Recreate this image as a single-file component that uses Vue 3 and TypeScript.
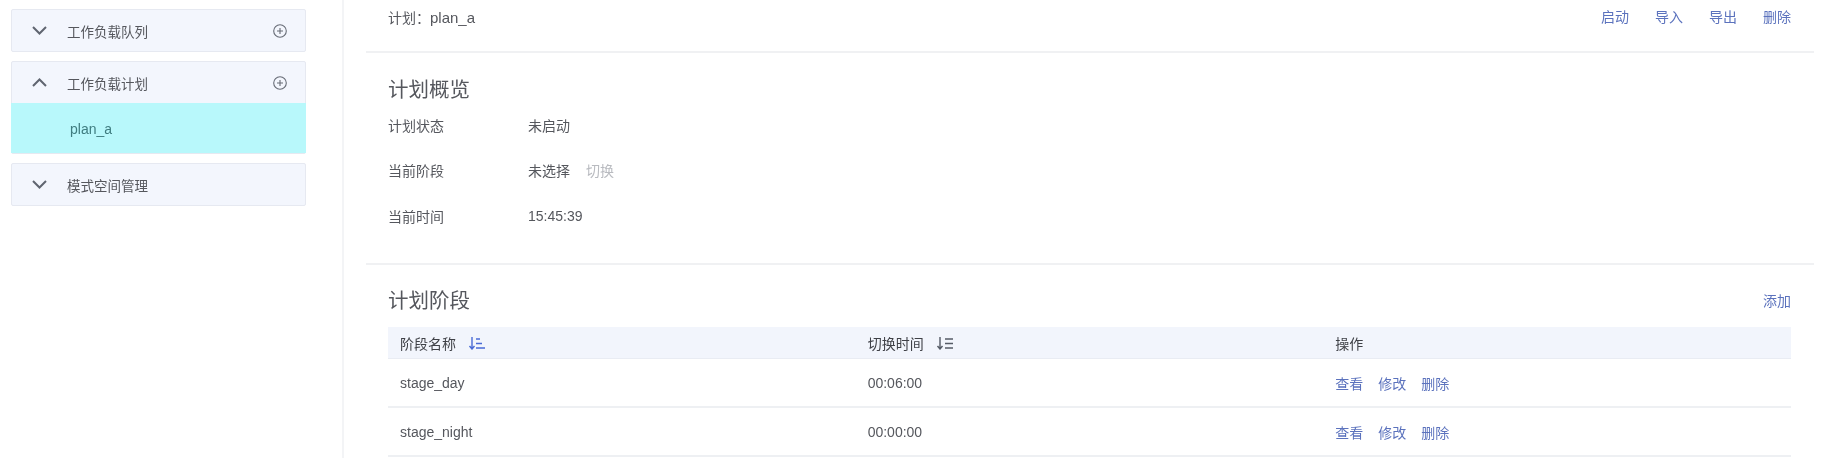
<template>
  <div class="page">
    <aside class="sidebar">
      <section v-for="group in groups" :key="group.name" class="group">
        <div class="group-head">
          <svg class="chevron" :class="{ open: group.open }" viewBox="0 0 15 9" width="15" height="9">
            <path d="M1 1l6.500 6.500L14 1" fill="none" stroke="#5f6570" stroke-width="2" />
          </svg>
          <span class="group-name">{{ group.name }}</span>
          <svg v-if="group.addable" class="add" viewBox="0 0 14 14" width="14" height="14">
            <circle cx="7" cy="7" r="6.300" fill="none" stroke="#666b75" stroke-width="1.100" />
            <path d="M7 4v6M4 7h6" fill="none" stroke="#666b75" stroke-width="1.100" />
          </svg>
        </div>
        <div v-for="item in group.items" :key="item" class="group-item">{{ item }}</div>
      </section>
    </aside>

    <main class="content">
      <header class="plan-bar">
        <div class="plan-name"><span class="plan-key">计划：</span>plan_a</div>
        <nav class="links">
          <a v-for="action in planActions" :key="action">{{ action }}</a>
        </nav>
      </header>

      <section class="overview">
        <h2>计划概览</h2>
        <div v-for="row in overview" :key="row.label" class="info-row">
          <span class="info-label">{{ row.label }}</span>
          <span class="info-value">{{ row.value }}</span>
          <span v-if="row.extra" class="info-extra">{{ row.extra }}</span>
        </div>
      </section>

      <section class="stages">
        <div class="stages-head">
          <h2>计划阶段</h2>
          <a class="add-link">添加</a>
        </div>
        <div class="table">
          <div class="cell th">
            阶段名称
            <svg class="sort" viewBox="0 0 18 14" width="18" height="14">
              <path d="M4 1v12M1.500 10L4 13l2.500-3" fill="none" stroke="#4a6bd6" stroke-width="1.400" />
              <path d="M8 3h4M8 7.500h6M8 12h9" fill="none" stroke="#4a6bd6" stroke-width="1.400" />
            </svg>
          </div>
          <div class="cell th">
            切换时间
            <svg class="sort" viewBox="0 0 18 14" width="18" height="14">
              <path d="M4 1v12M1.500 10L4 13l2.500-3" fill="none" stroke="#555b66" stroke-width="1.400" />
              <path d="M9 3h8M9 7.500h8M9 12h8" fill="none" stroke="#555b66" stroke-width="1.400" />
            </svg>
          </div>
          <div class="cell th">操作</div>
          <template v-for="stage in stages" :key="stage.name">
            <div class="cell">{{ stage.name }}</div>
            <div class="cell">{{ stage.time }}</div>
            <div class="cell ops">
              <a v-for="op in rowOps" :key="op">{{ op }}</a>
            </div>
          </template>
        </div>
      </section>
    </main>
  </div>
</template>

<script setup lang="ts">
interface Group {
  name: string;
  open: boolean;
  addable: boolean;
  items: string[];
}

const groups: Group[] = [
  { name: '工作负载队列', open: false, addable: true, items: [] },
  { name: '工作负载计划', open: true, addable: true, items: ['plan_a'] },
  { name: '模式空间管理', open: false, addable: false, items: [] }
];

const planActions = ['启动', '导入', '导出', '删除'];
const rowOps = ['查看', '修改', '删除'];

const overview = [
  { label: '计划状态', value: '未启动' },
  { label: '当前阶段', value: '未选择', extra: '切换' },
  { label: '当前时间', value: '15:45:39' }
];

const stages = [
  { name: 'stage_day', time: '00:06:00' },
  { name: 'stage_night', time: '00:00:00' }
];
</script>

<style>
body {
  background: #fff;
  overflow: hidden;
}
</style>

<style scoped>
.page {
  display: flex;
  height: 458px;
  overflow: hidden;
  background: #fff;
  color: #55575d;
  font-family: "Liberation Sans", "Noto Sans CJK SC", sans-serif;
  font-size: 14px;
  filter: blur(0.6px);
}

.sidebar {
  width: 344px;
  flex: none;
  box-sizing: border-box;
  padding: 9px 36px 0 11px;
  border-right: 2px solid #f3f4f6;
  display: flex;
  flex-direction: column;
  gap: 9px;
}

.group {
  background: #f3f6fd;
  border: 1px solid #e6e9f1;
  border-radius: 2px;
}

.group-head {
  height: 41px;
  display: flex;
  align-items: center;
  padding: 0 18px 0 20px;
}

.chevron.open {
  transform: rotate(180deg);
}

.group-name {
  margin-left: 20px;
  flex: 1;
  font-size: 13.500px;
}

.group-item {
  height: 50px;
  line-height: 52px;
  margin: 0 -1px;
  padding-left: 59px;
  background: #b8f8fb;
  color: #3f7d80;
}

.content {
  flex: 1;
  min-width: 0;
  padding: 0 14px 0 22px;
}

.plan-bar {
  height: 53px;
  box-sizing: border-box;
  padding: 0 23px 18px 22px;
  display: flex;
  align-items: center;
  justify-content: space-between;
  border-bottom: 2px solid #f0f1f3;
}

.plan-name {
  font-size: 15px;
}

.plan-key {
  font-size: 14px;
}

.links {
  display: flex;
  gap: 26px;
  margin-bottom: 2px;
}

a {
  color: #5b72bd;
}

.overview {
  height: 212px;
  box-sizing: border-box;
  padding: 25px 23px 0 22px;
  border-bottom: 2px solid #f0f1f3;
}

h2 {
  margin: 0;
  font-size: 20.500px;
  font-weight: 400;
  line-height: 24px;
  color: #55575d;
}

.info-row {
  height: 45.500px;
  display: flex;
  align-items: center;
}

.info-label {
  width: 140px;
}

.info-extra {
  margin-left: 16px;
  color: #b9bbc0;
}

.stages {
  padding: 0 23px 0 22px;
}

.stages-head {
  height: 62px;
  box-sizing: border-box;
  padding-top: 24px;
  display: flex;
  justify-content: space-between;
}

.add-link {
  line-height: 24px;
}

.table {
  display: grid;
  grid-template-columns: repeat(3, 1fr);
}

.cell {
  height: 49px;
  box-sizing: border-box;
  padding-left: 12px;
  display: flex;
  align-items: center;
  border-bottom: 2px solid #eef0f3;
}

.th {
  height: 32px;
  background: #f2f5fc;
  color: #3f4147;
  border-bottom: 1px solid #e9ecf3;
}

.sort {
  margin-left: 12px;
}

.ops {
  gap: 15px;
}
</style>
